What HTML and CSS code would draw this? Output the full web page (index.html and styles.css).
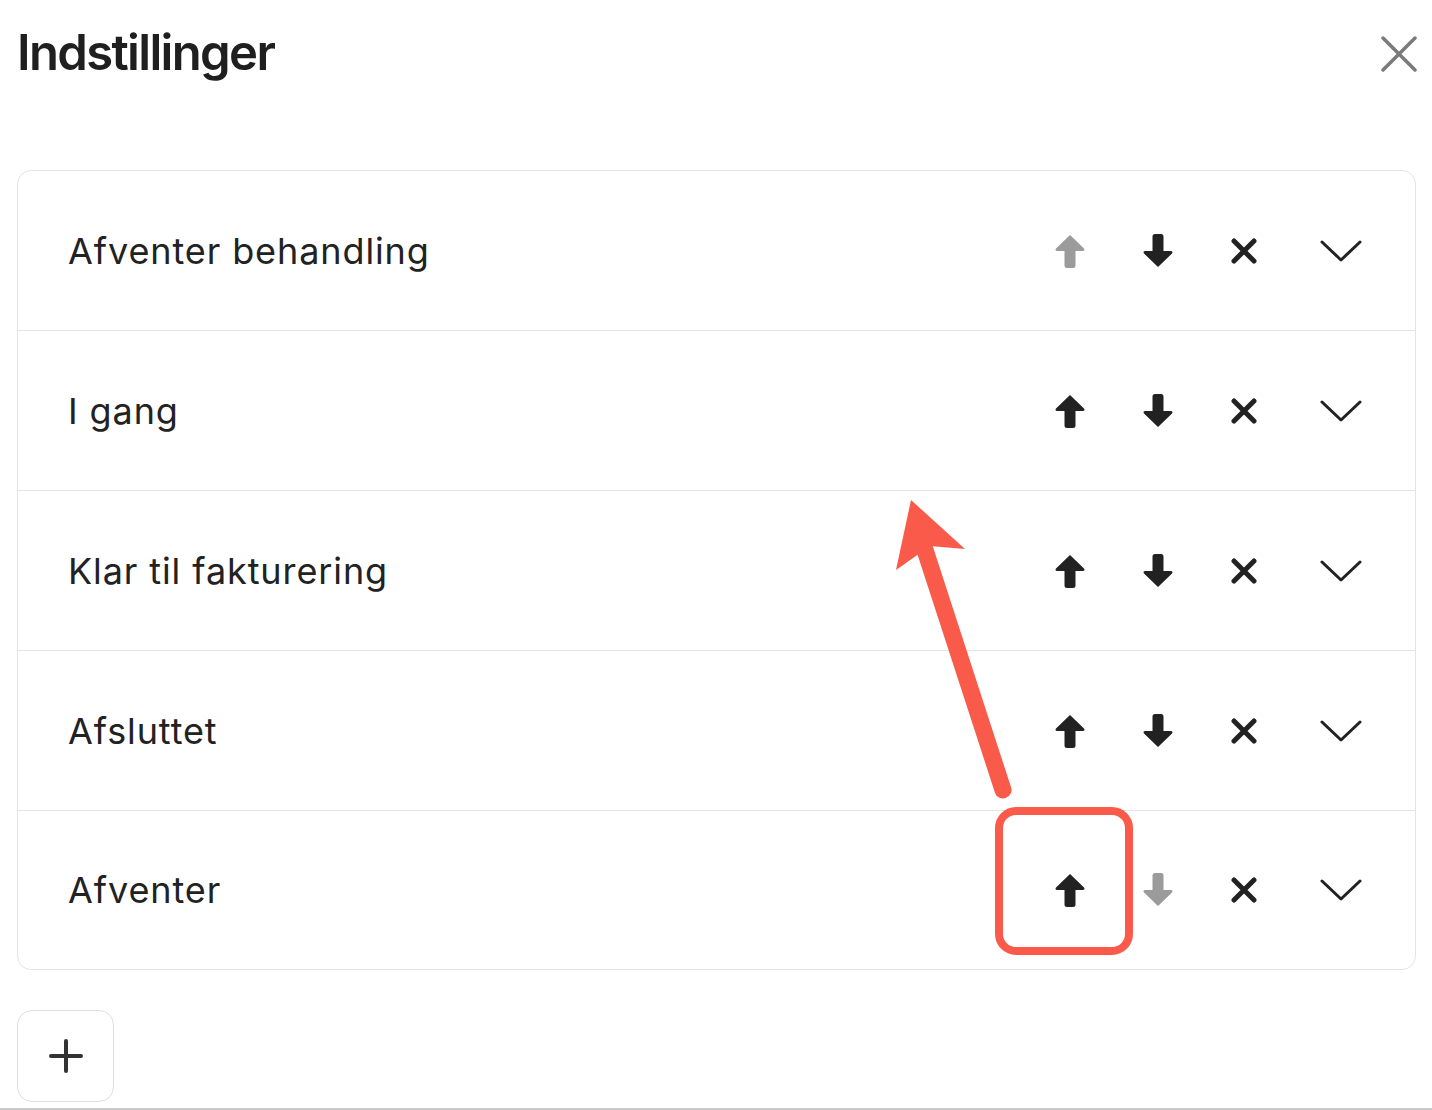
FILE: index.html
```html
<!DOCTYPE html>
<html lang="da">
<head>
<meta charset="utf-8">
<title>Indstillinger</title>
<link rel="stylesheet" href="styles.css">
</head>
<body>
<div class="page">
  <header class="header">
    <h1 class="title">Indstillinger</h1>
    <button class="close" aria-label="Luk">
      <svg width="36" height="36" viewBox="0 0 36 36"><path d="M2 2 L34 34 M34 2 L2 34" stroke="#7a7a7a" stroke-width="3.5" stroke-linecap="round" fill="none"/></svg>
    </button>
  </header>

  <div class="card">
    <div class="row">
      <span class="label">Afventer behandling</span>
      <div class="actions">
        <button class="btn disabled"><svg class="arrow" width="30" height="34" viewBox="0 0 30 34"><path d="M15 1 L29 14.5 Q30.5 17 27.5 17 L20.5 17 L20.5 31.5 Q20.5 34 18 34 L12 34 Q9.5 34 9.5 31.5 L9.5 17 L2.5 17 Q-0.5 17 1 14.5 Z"/></svg></button>
        <button class="btn"><svg class="arrow" width="30" height="34" viewBox="0 0 30 34"><path d="M15 33 L29 19.5 Q30.5 17 27.5 17 L20.5 17 L20.5 2.5 Q20.5 0 18 0 L12 0 Q9.5 0 9.5 2.5 L9.5 17 L2.5 17 Q-0.5 17 1 19.5 Z"/></svg></button>
        <button class="btn"><svg width="26" height="26" viewBox="0 0 26 26"><path d="M3 3 L23 23 M23 3 L3 23" stroke="#222" stroke-width="5" stroke-linecap="round" fill="none"/></svg></button>
        <button class="btn"><svg width="42" height="22" viewBox="0 0 42 22"><path d="M2 2 L21 20 L40 2" stroke="#222" stroke-width="3" stroke-linecap="round" stroke-linejoin="round" fill="none"/></svg></button>
      </div>
    </div>
    <div class="row">
      <span class="label">I gang</span>
      <div class="actions">
        <button class="btn"><svg class="arrow" width="30" height="34" viewBox="0 0 30 34"><path d="M15 1 L29 14.5 Q30.5 17 27.5 17 L20.5 17 L20.5 31.5 Q20.5 34 18 34 L12 34 Q9.5 34 9.5 31.5 L9.5 17 L2.5 17 Q-0.5 17 1 14.5 Z"/></svg></button>
        <button class="btn"><svg class="arrow" width="30" height="34" viewBox="0 0 30 34"><path d="M15 33 L29 19.5 Q30.5 17 27.5 17 L20.5 17 L20.5 2.5 Q20.5 0 18 0 L12 0 Q9.5 0 9.5 2.5 L9.5 17 L2.5 17 Q-0.5 17 1 19.5 Z"/></svg></button>
        <button class="btn"><svg width="26" height="26" viewBox="0 0 26 26"><path d="M3 3 L23 23 M23 3 L3 23" stroke="#222" stroke-width="5" stroke-linecap="round" fill="none"/></svg></button>
        <button class="btn"><svg width="42" height="22" viewBox="0 0 42 22"><path d="M2 2 L21 20 L40 2" stroke="#222" stroke-width="3" stroke-linecap="round" stroke-linejoin="round" fill="none"/></svg></button>
      </div>
    </div>
    <div class="row">
      <span class="label">Klar til fakturering</span>
      <div class="actions">
        <button class="btn"><svg class="arrow" width="30" height="34" viewBox="0 0 30 34"><path d="M15 1 L29 14.5 Q30.5 17 27.5 17 L20.5 17 L20.5 31.5 Q20.5 34 18 34 L12 34 Q9.5 34 9.5 31.5 L9.5 17 L2.5 17 Q-0.5 17 1 14.5 Z"/></svg></button>
        <button class="btn"><svg class="arrow" width="30" height="34" viewBox="0 0 30 34"><path d="M15 33 L29 19.5 Q30.5 17 27.5 17 L20.5 17 L20.5 2.5 Q20.5 0 18 0 L12 0 Q9.5 0 9.5 2.5 L9.5 17 L2.5 17 Q-0.5 17 1 19.5 Z"/></svg></button>
        <button class="btn"><svg width="26" height="26" viewBox="0 0 26 26"><path d="M3 3 L23 23 M23 3 L3 23" stroke="#222" stroke-width="5" stroke-linecap="round" fill="none"/></svg></button>
        <button class="btn"><svg width="42" height="22" viewBox="0 0 42 22"><path d="M2 2 L21 20 L40 2" stroke="#222" stroke-width="3" stroke-linecap="round" stroke-linejoin="round" fill="none"/></svg></button>
      </div>
    </div>
    <div class="row">
      <span class="label">Afsluttet</span>
      <div class="actions">
        <button class="btn"><svg class="arrow" width="30" height="34" viewBox="0 0 30 34"><path d="M15 1 L29 14.5 Q30.5 17 27.5 17 L20.5 17 L20.5 31.5 Q20.5 34 18 34 L12 34 Q9.5 34 9.5 31.5 L9.5 17 L2.5 17 Q-0.5 17 1 14.5 Z"/></svg></button>
        <button class="btn"><svg class="arrow" width="30" height="34" viewBox="0 0 30 34"><path d="M15 33 L29 19.5 Q30.5 17 27.5 17 L20.5 17 L20.5 2.5 Q20.5 0 18 0 L12 0 Q9.5 0 9.5 2.5 L9.5 17 L2.5 17 Q-0.5 17 1 19.5 Z"/></svg></button>
        <button class="btn"><svg width="26" height="26" viewBox="0 0 26 26"><path d="M3 3 L23 23 M23 3 L3 23" stroke="#222" stroke-width="5" stroke-linecap="round" fill="none"/></svg></button>
        <button class="btn"><svg width="42" height="22" viewBox="0 0 42 22"><path d="M2 2 L21 20 L40 2" stroke="#222" stroke-width="3" stroke-linecap="round" stroke-linejoin="round" fill="none"/></svg></button>
      </div>
    </div>
    <div class="row">
      <span class="label">Afventer</span>
      <div class="actions">
        <button class="btn"><svg class="arrow" width="30" height="34" viewBox="0 0 30 34"><path d="M15 1 L29 14.5 Q30.5 17 27.5 17 L20.5 17 L20.5 31.5 Q20.5 34 18 34 L12 34 Q9.5 34 9.5 31.5 L9.5 17 L2.5 17 Q-0.5 17 1 14.5 Z"/></svg></button>
        <button class="btn disabled"><svg class="arrow" width="30" height="34" viewBox="0 0 30 34"><path d="M15 33 L29 19.5 Q30.5 17 27.5 17 L20.5 17 L20.5 2.5 Q20.5 0 18 0 L12 0 Q9.5 0 9.5 2.5 L9.5 17 L2.5 17 Q-0.5 17 1 19.5 Z"/></svg></button>
        <button class="btn"><svg width="26" height="26" viewBox="0 0 26 26"><path d="M3 3 L23 23 M23 3 L3 23" stroke="#222" stroke-width="5" stroke-linecap="round" fill="none"/></svg></button>
        <button class="btn"><svg width="42" height="22" viewBox="0 0 42 22"><path d="M2 2 L21 20 L40 2" stroke="#222" stroke-width="3" stroke-linecap="round" stroke-linejoin="round" fill="none"/></svg></button>
      </div>
    </div>
  </div>

  <button class="add" aria-label="Tilføj">
    <svg width="34" height="34" viewBox="0 0 34 34"><path d="M17 2 L17 32 M2 17 L32 17" stroke="#333" stroke-width="4" stroke-linecap="round" fill="none"/></svg>
  </button>
  <div class="footer-line"></div>

  <svg class="annotation" width="1432" height="1110" viewBox="0 0 1432 1110">
    <rect x="999" y="811" width="130" height="140" rx="17" ry="17" fill="none" stroke="#fa5a4a" stroke-width="8"/>
    <line x1="1003" y1="790" x2="925" y2="550" stroke="#fa5a4a" stroke-width="17" stroke-linecap="round"/>
    <polygon points="911,500 965,549 930,546 896,570" fill="#fa5a4a"/>
  </svg>
</div>
</body>
</html>
```

FILE: styles.css
```css
html, body {
  margin: 0;
  padding: 0;
  background: #ffffff;
}

body {
  font-family: Inter, "Liberation Sans", Arial, sans-serif;
  color: #222;
}

.page {
  position: relative;
  width: 1432px;
  height: 1110px;
  overflow: hidden;
}

.header {
  display: flex;
  justify-content: space-between;
  align-items: flex-start;
  padding: 23px 15px 0 17px;
}

.title {
  margin: 0;
  font-size: 49px;
  font-weight: 600;
  line-height: 59px;
  letter-spacing: -1.65px;
  color: #1f1f1f;
}

.close {
  margin-top: 13px;
  padding: 0;
  border: 0;
  background: none;
  width: 36px;
  height: 36px;
  display: flex;
}

.card {
  margin: 88px 16px 0 17px;
  border: 1.5px solid #e4e4e4;
  border-radius: 14px;
}

.row {
  box-sizing: border-box;
  height: 160px;
  display: flex;
  align-items: center;
  justify-content: space-between;
  padding: 0 19px 0 50px;
  border-bottom: 1.5px solid #e4e4e4;
}

.row:last-child {
  border-bottom: 0;
  height: 158px;
}

.label {
  font-size: 36px;
  font-weight: 400;
  color: #222;
  letter-spacing: 0.9px;
}

.actions {
  display: grid;
  grid-template-columns: 88px 88px 84px 110px;
  align-items: center;
  justify-items: center;
}

.btn {
  padding: 0;
  border: 0;
  background: none;
  display: flex;
  align-items: center;
  justify-content: center;
  height: 40px;
}

.arrow path {
  fill: #222;
}

.btn.disabled .arrow path {
  fill: #9b9b9b;
}

.add {
  display: flex;
  align-items: center;
  justify-content: center;
  margin: 40px 0 0 17px;
  width: 97px;
  height: 92px;
  padding: 0;
  background: #fff;
  border: 1.5px solid #dedede;
  border-radius: 15px;
}

.footer-line {
  margin-top: 6px;
  height: 2px;
  background: #c8c8c8;
}

.annotation {
  position: absolute;
  top: 0;
  left: 0;
  pointer-events: none;
}
```
